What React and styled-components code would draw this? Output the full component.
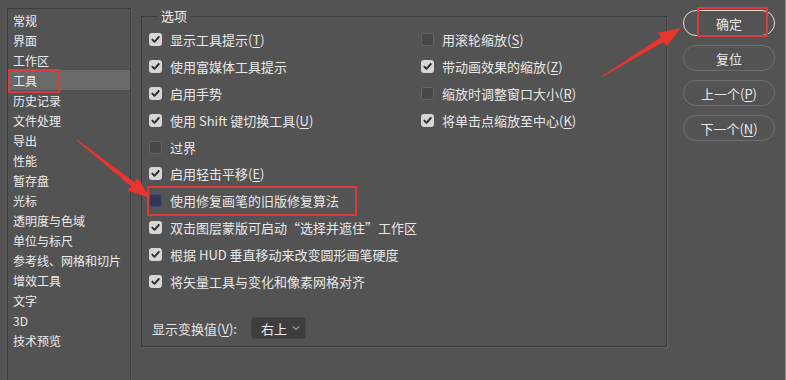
import React from "react";
import styled, { createGlobalStyle, css } from "styled-components";

const Global = createGlobalStyle`
  html, body { margin: 0; padding: 0; background: #535353; }
  body { font-family: "Noto Sans CJK SC", "Noto Sans", sans-serif; color: #e4e4e4; }
  * { box-sizing: border-box; }
`;

const Page = styled.div`
  position: relative;
  width: 786px;
  height: 380px;
  overflow: hidden;
  background: #535353;
  display: flex;
  align-items: flex-start;
  border-right: 1px solid #8c8c8c;
`;

const Sidebar = styled.ul`
  list-style: none;
  margin: 8px 0 0 7px;
  padding: 1px 0 0;
  width: 124px;
  height: 400px;
  border: 1px solid #3d3d3d;
  box-shadow: 1px 0 0 #5d5d5d;
  flex: none;
`;

const NavItem = styled.li`
  height: 20px;
  display: flex;
  align-items: center;
  padding-left: 5px;
  font-size: 12px;
  color: #ececec;
  white-space: nowrap;
  ${(p) =>
    p.$active &&
    css`
      background: #696969;
    `}
`;

const Marked = styled.span`
  position: relative;
  display: inline-flex;
  align-items: center;
  &::after {
    content: "";
    position: absolute;
    left: ${(p) => p.$l}px;
    right: ${(p) => p.$r}px;
    top: ${(p) => p.$t}px;
    bottom: ${(p) => p.$b}px;
    border: 2px solid #dc3a3a;
    pointer-events: none;
  }
`;

const Group = styled.fieldset`
  margin: 8px 0 0 10px;
  padding: 2px 0 7px;
  width: 526px;
  height: 339px;
  border: 1px solid #3c3c3c;
  box-shadow: 1px 1px 0 #5f5f5f;
  display: flex;
  flex-direction: column;
  flex: none;
  min-width: 0;
`;

const Legend = styled.legend`
  margin-left: 15px;
  padding: 0 4px;
  font-size: 13px;
  line-height: 16px;
  color: #ececec;
`;

const Columns = styled.div`
  display: grid;
  grid-template-columns: 272px 1fr;
  padding-left: 7px;
`;

const Column = styled.div`
  display: flex;
  flex-direction: column;
`;

const Row = styled.label`
  height: 26.9px;
  display: flex;
  align-items: center;
  gap: 8px;
  font-size: 13px;
  color: #e8e8e8;
  white-space: nowrap;
`;

const Box = styled.span`
  width: 13px;
  height: 13px;
  border-radius: 3px;
  flex: none;
  display: inline-flex;
  align-items: center;
  justify-content: center;
  ${(p) =>
    p.$checked
      ? css`
          background: #d6d6d6;
        `
      : p.$focus
      ? css`
          background: #2f3850;
          border: 1px solid #3f4c6e;
        `
      : css`
          background: #474747;
          border: 1px solid #656565;
        `}
`;

const U = styled.u`
  text-underline-offset: 2px;
`;

const Footer = styled.div`
  margin-top: auto;
  display: flex;
  align-items: center;
  padding-left: 10px;
  gap: 14px;
  font-size: 13px;
  color: #e4e4e4;
`;

const Select = styled.div`
  width: 55px;
  height: 22px;
  background: #3d3d3d;
  border: 1px solid #474747;
  border-radius: 3px;
  display: flex;
  align-items: center;
  justify-content: space-between;
  padding: 0 5px 0 9px;
  font-size: 13px;
  color: #ececec;
`;

const Buttons = styled.div`
  margin-left: 16px;
  padding-top: 10px;
  width: 92px;
  display: flex;
  flex-direction: column;
  gap: 9px;
  flex: none;
`;

const Button = styled.button`
  height: 26px;
  width: 92px;
  border-radius: 13px;
  background: transparent;
  border: 1px solid ${(p) => (p.$primary ? "#dedede" : "#6e6e6e")};
  color: #e8e8e8;
  font-family: inherit;
  font-size: 13px;
  display: flex;
  align-items: center;
  justify-content: center;
  padding: 0;
  position: relative;
  ${(p) =>
    p.$marked &&
    css`
      &::after {
        content: "";
        position: absolute;
        left: 13px;
        right: 6px;
        top: -4px;
        bottom: -2px;
        border: 2px solid #dc3a3a;
      }
    `}
`;

const Overlay = styled.svg`
  position: absolute;
  left: 0;
  top: 0;
  pointer-events: none;
`;

function Check({ checked, focus }) {
  return (
    <Box $checked={checked} $focus={focus}>
      {checked && (
        <svg width="11" height="11" viewBox="0 0 11 11">
          <path d="M2.3 5.6 L4.5 7.8 L8.8 3" fill="none" stroke="#2e2e2e" strokeWidth="1.9" strokeLinecap="round" strokeLinejoin="round" />
        </svg>
      )}
    </Box>
  );
}

function arrowPoints(tx, ty, px, py) {
  const dx = px - tx;
  const dy = py - ty;
  const len = Math.hypot(dx, dy);
  const ux = dx / len;
  const uy = dy / len;
  const nx = -uy;
  const ny = ux;
  const head = 22;
  const bx = px - ux * head;
  const by = py - uy * head;
  const pts = [
    [tx + nx * 0.6, ty + ny * 0.6],
    [bx + nx * 2.6, by + ny * 2.6],
    [bx + nx * 8, by + ny * 8],
    [px, py],
    [bx - nx * 8, by - ny * 8],
    [bx - nx * 2.6, by - ny * 2.6],
    [tx - nx * 0.6, ty - ny * 0.6],
  ];
  return pts.map((p) => p.map((v) => v.toFixed(1)).join(",")).join(" ");
}

const nav = [
  "常规", "界面", "工作区", "工具", "历史记录", "文件处理", "导出", "性能", "暂存盘",
  "光标", "透明度与色域", "单位与标尺", "参考线、网格和切片", "增效工具", "文字", "3D", "技术预览",
];

const left = [
  { c: true, t: <>显示工具提示(<U>T</U>)</> },
  { c: true, t: <>使用富媒体工具提示</> },
  { c: true, t: <>启用手势</> },
  { c: true, t: <>使用 Shift 键切换工具(<U>U</U>)</> },
  { c: false, t: <>过界</> },
  { c: true, t: <>启用轻击平移(<U>E</U>)</> },
  { c: false, focus: true, mark: true, t: <>使用修复画笔的旧版修复算法</> },
  { c: true, t: <>双击图层蒙版可启动“选择并遮住”工作区</> },
  { c: true, t: <>根据 HUD 垂直移动来改变圆形画笔硬度</> },
  { c: true, t: <>将矢量工具与变化和像素网格对齐</> },
];

const right = [
  { c: false, t: <>用滚轮缩放(<U>S</U>)</> },
  { c: true, t: <>带动画效果的缩放(<U>Z</U>)</> },
  { c: false, t: <>缩放时调整窗口大小(<U>R</U>)</> },
  { c: true, t: <>将单击点缩放至中心(<U>K</U>)</> },
];

function OptionRow({ item }) {
  const content = (
    <>
      <Check checked={item.c} focus={item.focus} />
      <span>{item.t}</span>
    </>
  );
  return (
    <Row>
      {item.mark ? (
        <Marked $l={-2} $r={-18} $t={-5} $b={-6} style={{ gap: 8 }}>
          {content}
        </Marked>
      ) : (
        content
      )}
    </Row>
  );
}

export default function App() {
  return (
    <>
      <Global />
      <Page>
        <Sidebar>
          {nav.map((n) => (
            <NavItem key={n} $active={n === "工具"}>
              {n === "工具" ? (
                <Marked $l={-5} $r={-23} $t={-3} $b={-4}>
                  {n}
                </Marked>
              ) : (
                n
              )}
            </NavItem>
          ))}
        </Sidebar>
        <Group>
          <Legend>选项</Legend>
          <Columns>
            <Column>
              {left.map((it, i) => (
                <OptionRow key={i} item={it} />
              ))}
            </Column>
            <Column>
              {right.map((it, i) => (
                <OptionRow key={i} item={it} />
              ))}
            </Column>
          </Columns>
          <Footer>
            <span>
              显示变换值(<U>V</U>):
            </span>
            <Select>
              <span>右上</span>
              <svg width="8" height="6" viewBox="0 0 8 6">
                <path d="M1 1.5 L4 4.5 L7 1.5" fill="none" stroke="#9a9a9a" strokeWidth="1.2" />
              </svg>
            </Select>
          </Footer>
        </Group>
        <Buttons>
          <Button $primary $marked>确定</Button>
          <Button>复位</Button>
          <Button>
            上一个(<U>P</U>)
          </Button>
          <Button>
            下一个(<U>N</U>)
          </Button>
        </Buttons>
        <Overlay width="786" height="380" viewBox="0 0 786 380">
          <polygon points={arrowPoints(77, 140, 150, 198)} fill="#e8352e" />
          <polygon points={arrowPoints(603, 76, 681, 28)} fill="#e8352e" />
        </Overlay>
      </Page>
    </>
  );
}
